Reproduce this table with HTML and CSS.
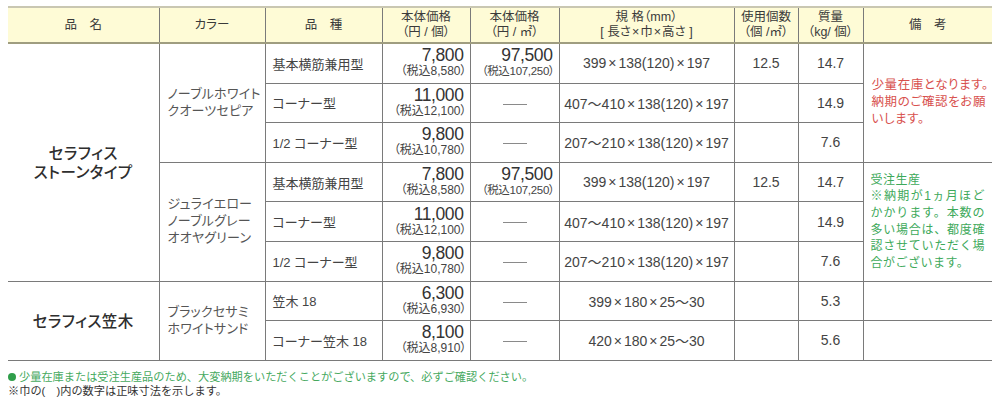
FILE: index.html
```html
<!DOCTYPE html>
<html lang="ja">
<head>
<meta charset="utf-8">
<link rel="stylesheet" href="styles.css">
</head>
<body>
<div class="wrap">
<table class="spec">
  <colgroup>
    <col class="c1"><col class="c2"><col class="c3"><col class="c4"><col class="c5"><col class="c6"><col class="c7"><col class="c8"><col class="c9">
  </colgroup>
  <thead>
    <tr>
      <th class="first">品　名</th>
      <th>カラー</th>
      <th>品　種</th>
      <th>本体価格<br>（円 / 個）</th>
      <th>本体価格<br>（円 / ㎡）</th>
      <th>規 格（mm）<br>[ 長さ<span class="hx">×</span>巾<span class="hx">×</span>高さ ]</th>
      <th>使用個数<br>（個 /㎡）</th>
      <th>質量<br>（kg/ 個）</th>
      <th class="last">備　考</th>
    </tr>
  </thead>
  <tbody>
    <tr>
      <td class="name first" rowspan="6">セラフィス<br>ストーンタイプ</td>
      <td class="color" rowspan="3">ノーブルホワイト<br>クオーツセピア</td>
      <td class="kind">基本横筋兼用型</td>
      <td class="price"><span class="big">7,800</span><span class="tax">（税込8,580）</span></td>
      <td class="price p2"><span class="big">97,500</span><span class="tax">（税込107,250）</span></td>
      <td class="ctr">399<span class="x">×</span>138(120)<span class="x">×</span>197</td>
      <td class="ctr">12.5</td>
      <td class="ctr">14.7</td>
      <td class="note red last" rowspan="3">少量在庫となります。<br>納期のご確認をお願<br>いします。</td>
    </tr>
    <tr>
      <td class="kind">コーナー型</td>
      <td class="price"><span class="big">11,000</span><span class="tax">（税込12,100）</span></td>
      <td class="ctr"><span class="dash"></span></td>
      <td class="ctr">407～410<span class="x">×</span>138(120)<span class="x">×</span>197</td>
      <td class="ctr"></td>
      <td class="ctr">14.9</td>
    </tr>
    <tr>
      <td class="kind">1/2 コーナー型</td>
      <td class="price"><span class="big">9,800</span><span class="tax">（税込10,780）</span></td>
      <td class="ctr"><span class="dash"></span></td>
      <td class="ctr">207～210<span class="x">×</span>138(120)<span class="x">×</span>197</td>
      <td class="ctr"></td>
      <td class="ctr">7.6</td>
    </tr>
    <tr>
      <td class="color" rowspan="3">ジュライエロー<br>ノーブルグレー<br>オオヤグリーン</td>
      <td class="kind">基本横筋兼用型</td>
      <td class="price"><span class="big">7,800</span><span class="tax">（税込8,580）</span></td>
      <td class="price p2"><span class="big">97,500</span><span class="tax">（税込107,250）</span></td>
      <td class="ctr">399<span class="x">×</span>138(120)<span class="x">×</span>197</td>
      <td class="ctr">12.5</td>
      <td class="ctr">14.7</td>
      <td class="note green last" rowspan="3">
        <span class="ln">受注生産</span>
        <span class="ln j">※納期が1ヵ月ほど</span>
        <span class="ln j">かかります。本数の</span>
        <span class="ln j">多い場合は、都度確</span>
        <span class="ln j">認させていただく場</span>
        <span class="ln">合がございます。</span>
      </td>
    </tr>
    <tr>
      <td class="kind">コーナー型</td>
      <td class="price"><span class="big">11,000</span><span class="tax">（税込12,100）</span></td>
      <td class="ctr"><span class="dash"></span></td>
      <td class="ctr">407～410<span class="x">×</span>138(120)<span class="x">×</span>197</td>
      <td class="ctr"></td>
      <td class="ctr">14.9</td>
    </tr>
    <tr>
      <td class="kind">1/2 コーナー型</td>
      <td class="price"><span class="big">9,800</span><span class="tax">（税込10,780）</span></td>
      <td class="ctr"><span class="dash"></span></td>
      <td class="ctr">207～210<span class="x">×</span>138(120)<span class="x">×</span>197</td>
      <td class="ctr"></td>
      <td class="ctr">7.6</td>
    </tr>
    <tr>
      <td class="name first" rowspan="2">セラフィス笠木</td>
      <td class="color" rowspan="2">ブラックセサミ<br>ホワイトサンド</td>
      <td class="kind">笠木 18</td>
      <td class="price"><span class="big">6,300</span><span class="tax">（税込6,930）</span></td>
      <td class="ctr"><span class="dash"></span></td>
      <td class="ctr">399<span class="x">×</span>180<span class="x">×</span>25～30</td>
      <td class="ctr"></td>
      <td class="ctr">5.3</td>
      <td class="note last"></td>
    </tr>
    <tr>
      <td class="kind">コーナー笠木 18</td>
      <td class="price"><span class="big">8,100</span><span class="tax">（税込8,910）</span></td>
      <td class="ctr"><span class="dash"></span></td>
      <td class="ctr">420<span class="x">×</span>180<span class="x">×</span>25～30</td>
      <td class="ctr"></td>
      <td class="ctr">5.6</td>
      <td class="note last"></td>
    </tr>
  </tbody>
</table>
<p class="foot green-t"><span class="dot"></span>少量在庫または受注生産品のため、大変納期をいただくことがございますので、必ずご確認ください。</p>
<p class="foot">※巾の(　)内の数字は正味寸法を示します。</p>
</div>
</body>
</html>
```

FILE: styles.css
```css
html, body {
  margin: 0;
  padding: 0;
  background: #fff;
}
body {
  font-family: "Liberation Sans", "Noto Sans CJK JP", sans-serif;
  font-feature-settings: "palt";
  color: #3a3a3a;
}
.wrap {
  padding: 6px 7px 0 8px;
}
.spec {
  width: 984px;
  border-collapse: collapse;
  table-layout: fixed;
}
.c1 { width: 151px; }
.c2 { width: 106px; }
.c3 { width: 117px; }
.c4 { width: 88px; }
.c5 { width: 89px; }
.c6 { width: 175px; }
.c7 { width: 64px; }
.c8 { width: 65px; }
.c9 { width: 129px; }

.spec th {
  background: #fefbd6;
  border-top: 2px solid #c9c7b2;
  border-bottom: 2px solid #9f9d80;
  border-left: 1px solid #7a7a7a;
  border-right: 1px solid #7a7a7a;
  height: 34px;
  padding: 0;
  font-weight: normal;
  font-size: 12.5px;
  line-height: 15px;
  color: #3a3a3a;
  text-align: center;
  vertical-align: middle;
}
.hx {
  margin: 0 1px;
}
.spec td {
  border: 1px solid #7a7a7a;
  padding: 0;
  height: 38.6px;
  font-size: 14px;
  vertical-align: middle;
  color: #3a3a3a;
  white-space: nowrap;
}
.spec .first { border-left: none; }
.spec .last { border-right: none; }

.spec td.name {
  text-align: center;
  font-size: 15.5px;
  line-height: 19px;
  font-weight: 500;
  letter-spacing: 0.5px;
  color: #2e2e2e;
  padding-top: 1px;
}
.spec td.color {
  padding-left: 8px;
  font-size: 13px;
  line-height: 17px;
  letter-spacing: 0.2px;
  color: #555;
  padding-bottom: 2px;
}
.spec td.kind {
  padding-left: 7px;
  font-size: 13px;
  color: #444;
}
.spec td.price {
  text-align: right;
  padding-right: 6px;
}
.big {
  display: block;
  font-size: 17.5px;
  line-height: 17px;
  letter-spacing: -0.4px;
  color: #333;
}
.tax {
  display: block;
  font-size: 12px;
  line-height: 15px;
  margin-right: -3px;
  color: #444;
}
.p2 .tax {
  font-size: 11.5px;
  letter-spacing: -0.3px;
  margin-right: -2px;
}
.spec td.ctr {
  text-align: center;
  font-size: 14px;
  color: #444;
}
.x {
  margin: 0 2px;
}
.dash {
  display: inline-block;
  width: 24px;
  border-top: 1px solid #8a8a8a;
  vertical-align: middle;
}
.spec td.note {
  padding: 0 4px 0 8px;
  font-size: 12.5px;
  line-height: 17px;
  letter-spacing: 0.6px;
  vertical-align: middle;
}
.spec td.red { color: #d8514e; }
.spec td.green {
  color: #3da95a;
  font-feature-settings: normal;
  font-size: 12px;
  letter-spacing: 0.5px;
  padding: 0 7px 0 7px;
  line-height: 16.7px;
}
.ln {
  display: block;
}
.ln.j {
  text-align: justify;
  text-align-last: justify;
}

.foot {
  margin: 0;
  font-size: 11.2px;
  line-height: 14px;
  color: #333;
  font-feature-settings: normal;
}
.green-t {
  margin-top: 9px;
  color: #46a95e;
}
.dot {
  display: inline-block;
  width: 8px;
  height: 8px;
  border-radius: 50%;
  background: #2f9e4a;
  margin-right: 3px;
  vertical-align: 0;
}
```
